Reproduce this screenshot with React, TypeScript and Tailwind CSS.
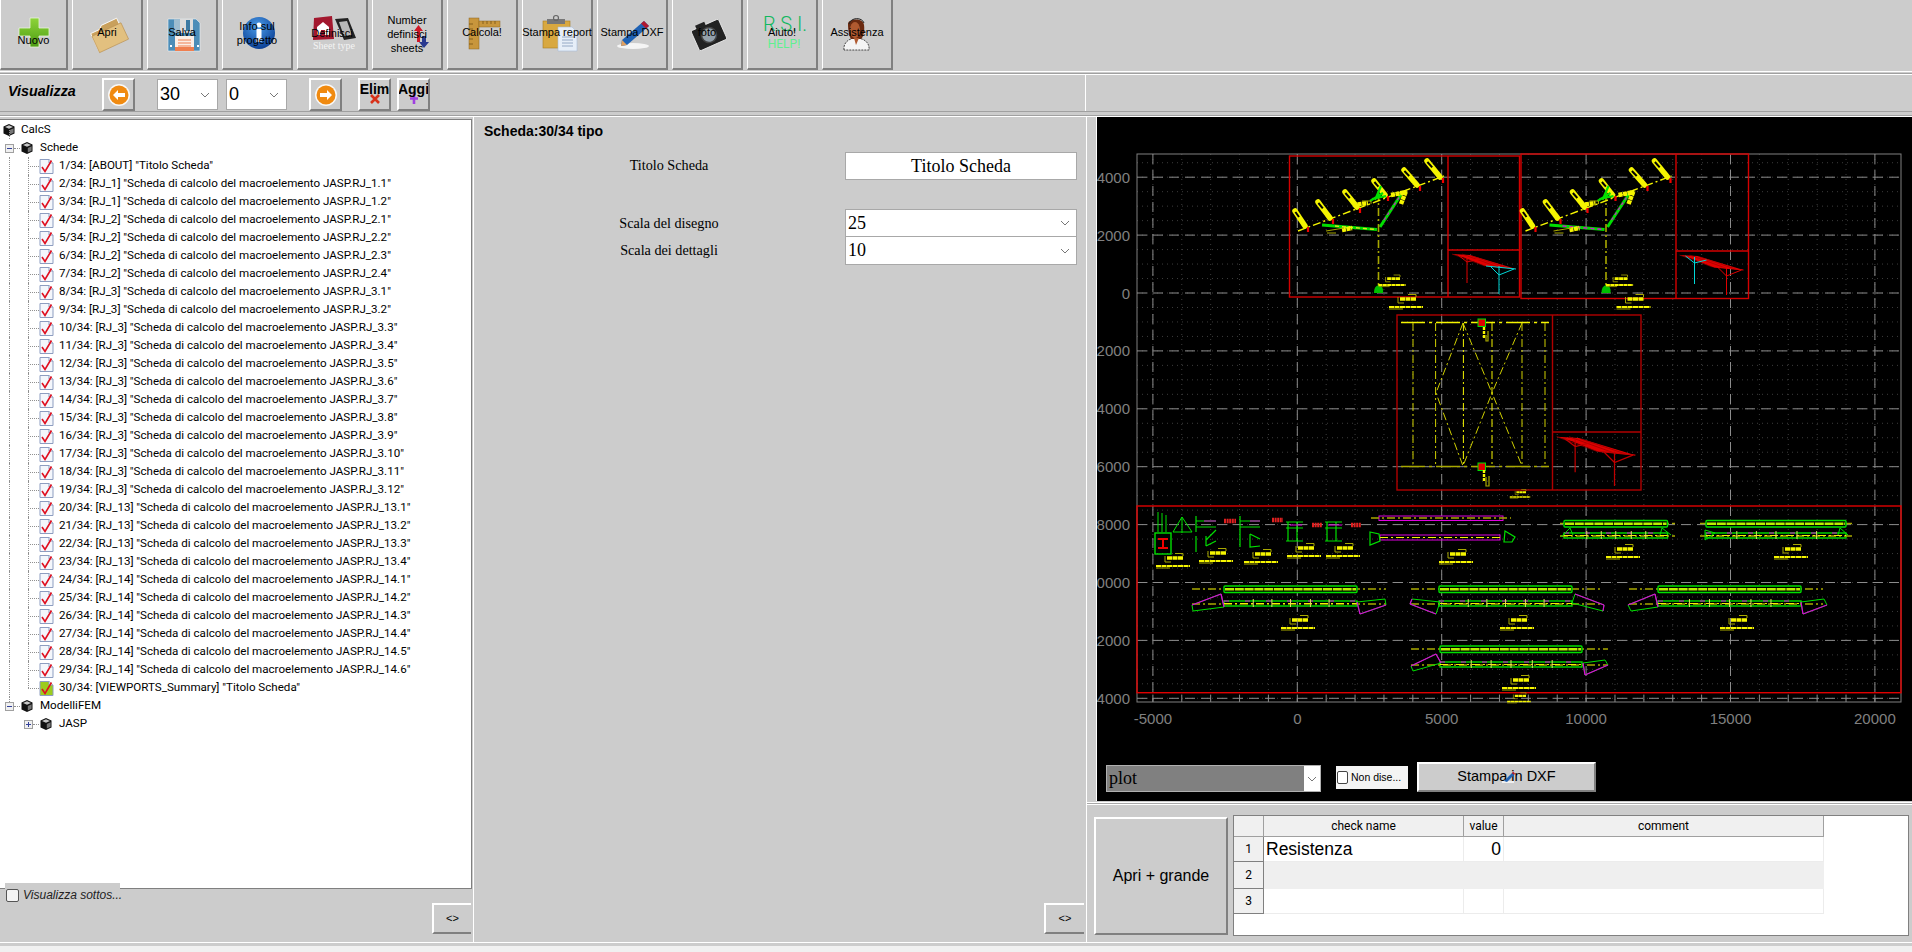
import type { ReactNode } from 'react';

const DD = '8 3 2 3';
const YEL = '#f5f500';
const OLV = '#a8a800';
const GRN = '#00e000';
const MAG = '#e000e0';

const sansFont = "font-['Liberation_Sans',Arial,sans-serif]";
const serifFont = "font-['Liberation_Serif','Times_New_Roman',serif]";
const uiFont = "font-['Roboto','Noto_Sans',sans-serif]";

function Cube() {
  return (
    <svg width="14" height="14" viewBox="0 0 14 14" className="shrink-0">
      <path d="M7 1 L12.5 3.5 V10.5 L7 13 L1.5 10.5 V3.5 Z" fill="#111" />
      <path d="M7 2.2 L11 4 L7 5.8 L3 4 Z" fill="#c8c8c8" />
      <path d="M7.8 7 L11.6 5.2 V9.8 L7.8 11.6 Z" fill="#777" />
    </svg>
  );
}

function CheckDoc({ selected }: { selected?: boolean }) {
  return (
    <svg width="15" height="17" viewBox="0 0 15 17" className="shrink-0">
      <path d="M1 1.5 H10 L14 5 V15.5 H1 Z" fill={selected ? '#9ccc1e' : '#f4f7fc'} stroke="#8d9dc0" />
      <path d="M10 1.5 V5 H14" fill="#fff" stroke="#8d9dc0" />
      <path d="M3 9 L6 13.5 L12.5 2.5" fill="none" stroke="#e01020" strokeWidth="1.6" />
    </svg>
  );
}

function Expander({ open }: { open?: boolean }) {
  return (
    <span className="relative z-10 flex h-[9px] w-[9px] shrink-0 items-center justify-center border border-[#a0a0a0] bg-[#f0f0f0]">
      <span className="absolute h-px w-[5px] bg-[#33419a]" />
      {!open && <span className="absolute h-[5px] w-px bg-[#33419a]" />}
    </span>
  );
}

function Chevron() {
  return (
    <svg width="10" height="6" viewBox="0 0 10 6" className="shrink-0">
      <path d="M1 1 L5 5 L9 1" fill="none" stroke="#777" strokeWidth="1" />
    </svg>
  );
}

type TreeItem = { label: string; selected?: boolean };

const treeItems: TreeItem[] = [
  { label: '1/34: [ABOUT] "Titolo Scheda"' },
  ...[
    ['RJ_1', '1.1'], ['RJ_1', '1.2'],
    ['RJ_2', '2.1'], ['RJ_2', '2.2'], ['RJ_2', '2.3'], ['RJ_2', '2.4'],
    ['RJ_3', '3.1'], ['RJ_3', '3.2'], ['RJ_3', '3.3'], ['RJ_3', '3.4'], ['RJ_3', '3.5'], ['RJ_3', '3.6'],
    ['RJ_3', '3.7'], ['RJ_3', '3.8'], ['RJ_3', '3.9'], ['RJ_3', '3.10'], ['RJ_3', '3.11'], ['RJ_3', '3.12'],
    ['RJ_13', '13.1'], ['RJ_13', '13.2'], ['RJ_13', '13.3'], ['RJ_13', '13.4'],
    ['RJ_14', '14.1'], ['RJ_14', '14.2'], ['RJ_14', '14.3'], ['RJ_14', '14.4'], ['RJ_14', '14.5'], ['RJ_14', '14.6'],
  ].map(([g, n], i) => ({
    label: `${i + 2}/34: [${g}] "Scheda di calcolo del macroelemento JASP.RJ_${n}"`,
  })),
  { label: '30/34: [VIEWPORTS_Summary] "Titolo Scheda"', selected: true },
];

function Tree() {
  return (
    <div className={`h-[770px] w-[472px] border-t border-r border-b border-[#808080] bg-white pt-px text-[11.6px] text-black ${uiFont}`}>
      <div className="flex h-[18px] items-center gap-[5px] pl-[2px]">
        <Cube />
        <span>CalcS</span>
      </div>
      <div className="relative flex h-[18px] items-center pl-[5px]">
        <span className="absolute top-[-9px] left-[9px] h-[9px] border-l border-dotted border-[#909090]" />
        <Expander open />
        <span className="w-[6px] border-t border-dotted border-[#909090]" />
        <Cube />
        <span className="ml-[6px]">Schede</span>
      </div>
      {treeItems.map((it, i) => (
        <div key={it.label} className="relative flex h-[18px] items-center pl-[28px]">
          <span className="absolute top-0 bottom-0 left-[9px] border-l border-dotted border-[#909090]" />
          <span className={`absolute top-0 left-[28px] border-l border-dotted border-[#909090] ${i === treeItems.length - 1 ? 'h-[9px]' : 'h-[18px]'}`} />
          <span className="w-[11px] shrink-0 border-t border-dotted border-[#909090]" />
          <CheckDoc selected={it.selected} />
          <span className="ml-[5px] whitespace-nowrap">{it.label}</span>
        </div>
      ))}
      <div className="relative flex h-[18px] items-center pl-[5px]">
        <span className="absolute top-0 left-[9px] h-[5px] border-l border-dotted border-[#909090]" />
        <Expander open />
        <span className="w-[6px] border-t border-dotted border-[#909090]" />
        <Cube />
        <span className="ml-[6px]">ModelliFEM</span>
      </div>
      <div className="relative flex h-[18px] items-center pl-[24px]">
        <Expander />
        <span className="w-[6px] border-t border-dotted border-[#909090]" />
        <Cube />
        <span className="ml-[6px]">JASP</span>
      </div>
    </div>
  );
}

function ToolButton({ w = 71, pad, children, icon }: { w?: number; pad: string; children: ReactNode; icon?: ReactNode }) {
  return (
    <div
      className={`relative flex h-[70px] shrink-0 items-center justify-center border-r-2 border-b-2 border-l border-r-[#808080] border-b-[#808080] border-l-white text-center text-[11px] leading-[14px] text-black ${pad} ${w === 68 ? 'w-[68px]' : 'w-[71px]'}`}
    >
      {icon && (
        <svg viewBox="0 0 71 70" className="absolute top-0 left-0 h-[70px] w-[71px]">
          {icon}
        </svg>
      )}
      <span className="relative whitespace-pre">{children}</span>
    </div>
  );
}

const icons = {
  nuovo: (
    <g>
      <defs>
        <linearGradient id="gp" x1="0" y1="0" x2="0" y2="1">
          <stop offset="0" stopColor="#8ed43a" />
          <stop offset="1" stopColor="#4c9c12" />
        </linearGradient>
      </defs>
      <path d="M29 18 H38 V28 H48 V36 H38 V47 H29 V36 H18 V28 H29 Z" fill="url(#gp)" stroke="#e8f5d8" strokeWidth="0.8" />
    </g>
  ),
  apri: (
    <g transform="rotate(-25 36 35)">
      <path d="M20 26 H30 L33 23 H50 V46 H20 Z" fill="#c9a05c" stroke="#fff" strokeWidth="0.8" />
      <rect x="20" y="29" width="32" height="18" fill="#e2c07f" stroke="#b98f4f" strokeWidth="0.6" />
    </g>
  ),
  salva: (
    <g>
      <path d="M20 19 H48 L52 23 V51 H20 Z" fill="#4c8db8" stroke="#eaf2f7" strokeWidth="0.6" />
      <rect x="26" y="19" width="19" height="14" fill="#dcdcdc" />
      <rect x="26" y="19" width="6" height="14" fill="#9dbcd0" />
      <rect x="38" y="20" width="4" height="11" fill="#3d7aa3" />
      <rect x="27" y="36" width="19" height="15" fill="#fbeee6" />
      <path d="M30 40 H43 M30 43 H43 M30 46 H43" stroke="#ef7f50" strokeWidth="1" />
      <rect x="27" y="47" width="19" height="4" fill="#ef7f50" />
      <rect x="22" y="45" width="2" height="2" fill="#fff" />
      <rect x="49" y="45" width="2" height="2" fill="#fff" />
    </g>
  ),
  info: (
    <g>
      <defs>
        <radialGradient id="gi" cx="0.45" cy="0.3" r="0.75">
          <stop offset="0" stopColor="#4a9be8" />
          <stop offset="1" stopColor="#073a90" />
        </radialGradient>
      </defs>
      <circle cx="36" cy="33" r="16" fill="url(#gi)" />
      <circle cx="36" cy="25" r="2.5" fill="#fff" />
      <rect x="33.5" y="29" width="5" height="13" fill="#fff" />
    </g>
  ),
  definisci: (
    <g>
      <path d="M16 18 L34 16 L36 39 L15 40 Z" fill="#a3182e" />
      <path d="M19 27 L25 22 L31 27 V35 H19 Z" fill="#fff" />
      <rect x="23" y="30" width="4" height="5" fill="#a3182e" />
      <path d="M37 19 L50 18 L58 38 L46 40 Z" fill="#222" />
      <path d="M41 22 L49 21 L54 35 L46 36 Z" fill="#b8b8b8" />
      <text x="36" y="49" textAnchor="middle" fontFamily="'Liberation Serif',serif" fontSize="10" fill="#f4f4f4">
        Sheet type
      </text>
    </g>
  ),
  number: (
    <g>
      <path d="M44 42 V31 H41 L45.5 25 L50 31 H47 V42 Z" fill="#d01828" />
      <path d="M49 36 V42 H46 L51 48 L56 42 H53 V36 Z" fill="#2a3a90" />
    </g>
  ),
  calcola: (
    <g>
      <rect x="21" y="18" width="10" height="31" fill="#c8963c" stroke="#8a6420" strokeWidth="0.5" />
      <rect x="31" y="21" width="21" height="6" fill="#c8963c" stroke="#8a6420" strokeWidth="0.5" />
      <path d="M21 24 H25 M21 29 H25 M21 34 H25 M21 39 H25 M21 44 H25 M35 21 V24 M39 21 V24 M43 21 V24 M47 21 V24" stroke="#6a4a10" strokeWidth="0.7" />
    </g>
  ),
  stampa: (
    <g>
      <rect x="20" y="21" width="27" height="27" fill="#d8a840" stroke="#a87c20" strokeWidth="0.6" />
      <rect x="24" y="19" width="18" height="5" fill="#777" />
      <circle cx="33" cy="18" r="2.5" fill="none" stroke="#666" strokeWidth="1.2" />
      <path d="M35 27 H49 L54 32 V51 H35 Z" fill="#e6eef8" stroke="#a8bcd8" strokeWidth="0.6" />
      <path d="M39 37 H50 M39 40 H50 M39 43 H50 M39 46 H50" stroke="#8298b8" strokeWidth="0.8" />
    </g>
  ),
  dxf: (
    <g>
      <ellipse cx="35" cy="46" rx="16" ry="3" fill="#f4f4f4" />
      <path d="M24 40 L46 21 L51 26 L29 45 L23 46 Z" fill="#1f62b4" />
      <path d="M43 23.5 L46 21 L51 26 L48 28.5 Z" fill="#b01830" />
      <path d="M24 40 L29 45 L23 46 Z" fill="#e0a060" />
    </g>
  ),
  foto: (
    <g transform="rotate(-24 36 35)">
      <rect x="21" y="24" width="30" height="22" rx="2" fill="#222" stroke="#eee" strokeWidth="0.8" />
      <rect x="27" y="21" width="10" height="4" fill="#222" />
      <circle cx="36" cy="35" r="7.5" fill="#94a0aa" stroke="#444" strokeWidth="1.5" />
    </g>
  ),
  aiuto: (
    <g>
      <text x="37" y="31" textAnchor="middle" fontFamily="Roboto,sans-serif" fontWeight="300" fontSize="20" fill="#10b860">
        R.S.I.
      </text>
      <text x="36" y="48" textAnchor="middle" fontFamily="Roboto,sans-serif" fontWeight="400" fontSize="12" fill="#60f090">
        HELP!
      </text>
    </g>
  ),
  assistenza: (
    <g>
      <path d="M21 50 C20 42 27 38 33 38 C40 38 47 42 46 50 Z" fill="#f4f4f4" stroke="#222" strokeWidth="0.8" strokeDasharray="2 1" />
      <path d="M25 24 C25 19 40 17 41 25 C42 31 40 38 38 39 L28 39 C26 36 25 30 25 24 Z" fill="#6a2a10" />
      <ellipse cx="32" cy="30" rx="5" ry="8" fill="#b05a30" />
      <path d="M31 38 L33 45 L36 38 Z" fill="#b05a30" />
      <path d="M26 24 C28 17 39 17 41 23" fill="none" stroke="#222" strokeWidth="1" />
    </g>
  ),
};

function ArrowButton({ left }: { left?: boolean }) {
  return (
    <div className="flex h-[33px] w-[33px] shrink-0 items-center justify-center border-2 border-t-white border-r-[#808080] border-b-[#808080] border-l-white">
      <svg width="24" height="24" viewBox="0 0 24 24">
        <circle cx="12" cy="12" r="11" fill="#fff" opacity="0.85" />
        <circle cx="12" cy="12" r="9.5" fill="#f08a10" />
        <path d={left ? 'M6 12 L11 7 V10 H18 V14 H11 V17 Z' : 'M18 12 L13 7 V10 H6 V14 H13 V17 Z'} fill="#fff" />
      </svg>
    </div>
  );
}

function SmallSelect({ value, w }: { value: string; w: string }) {
  return (
    <div className={`flex h-[31px] items-center justify-between border border-[#a8a8a8] bg-white pr-[7px] pl-[2px] text-[18px] text-black ${sansFont} ${w}`}>
      <span>{value}</span>
      <Chevron />
    </div>
  );
}

function EditButton({ label, icon }: { label: string; icon: ReactNode }) {
  return (
    <div className="relative flex h-[33px] w-[33px] shrink-0 justify-center overflow-hidden border-2 border-t-white border-r-[#808080] border-b-[#808080] border-l-white text-[14px] leading-[18px] font-bold text-black">
      <svg width="14" height="14" viewBox="0 0 14 14" className="absolute top-[11px] left-[8px]">
        {icon}
      </svg>
      <span className="relative whitespace-nowrap">{label}</span>
    </div>
  );
}

function Tag({ x, y, s = 1 }: { x: number; y: number; s?: number }) {
  return (
    <g transform={`translate(${x} ${y}) scale(${s})`} fill="none">
      <path d="M-6 -3 H10" stroke={YEL} strokeWidth="3.4" strokeDasharray="5 0.5" />
      <path d="M2 -7.5 H10 V-5 M-8 -5 V1 H-2" stroke={OLV} strokeWidth="1" />
      <path d="M-17 5 H17" stroke={YEL} strokeWidth="2.2" strokeDasharray="5 0.5" />
      <path d="M-17 7 H-3" stroke={OLV} strokeWidth="1" />
    </g>
  );
}

function Mesh({ tx, ty, s = 1, left, right }: { tx: number; ty: number; s?: number; left: string; right: string }) {
  return (
    <g transform={`translate(${tx} ${ty}) scale(${s})`} fill="none">
      <path d="M0 0 L18 1 L64 15 L33 12 L13 4 Z" fill="#e00000" />
      <path d="M0 0 L33 12 M10 0 L46 13 M20 2 L56 14" stroke="#900" strokeWidth="0.6" />
      <path d="M15 2 V29 M6 1 L15 8 L27 5" stroke={left} strokeWidth="1" />
      <path d="M47 12 V40 M38 12 L47 21 L62 15" stroke={right} strokeWidth="1" />
      <path d="M34 12 L64 15" stroke={right} strokeWidth="1" />
    </g>
  );
}

function Truss({ dx, swap }: { dx: number; swap?: boolean }) {
  const panels = [
    [1295, 211, 1305, 226],
    [1318, 202, 1330, 218],
    [1345, 192, 1357, 207],
    [1374, 181, 1385, 195],
    [1404, 170, 1417, 185],
    [1427, 161, 1440, 177],
  ];
  return (
    <g transform={`translate(${dx} 0)`} fill="none">
      <path d="M1298 231 L1444 176" stroke={YEL} strokeWidth="1.4" strokeDasharray={DD} />
      {panels.map(([a, b, c, d]) => (
        <g key={a}>
          <path d={`M${a} ${b} L${c} ${d}`} stroke={YEL} strokeWidth="5.5" strokeLinecap="round" strokeDasharray="7 0.8" />
          <path d={`M${a + 0.4} ${b + 1} L${a + (c - a) * 0.4} ${b + (d - b) * 0.4}`} stroke="#000" strokeWidth="2" />
          <path d={`M${c + 3} ${d + 1} v5`} stroke="#f00000" strokeWidth="2.2" />
        </g>
      ))}
      <path d="M1322 225 L1377 229.5" stroke={GRN} strokeWidth="3" />
      <path d="M1335 226 L1376 229.5" stroke={swap ? MAG : '#e8e020'} strokeWidth="1.4" strokeDasharray="4 3" />
      <path d="M1380 227 L1402 193" stroke={GRN} strokeWidth="3" />
      <path d="M1384 220 L1400 196" stroke={MAG} strokeWidth="1.2" strokeDasharray="3 3" />
      <path d="M1378.5 192 V290" stroke={OLV} strokeWidth="1.6" strokeDasharray={DD} />
      <path d="M1375 200 L1381 186 M1372 199 L1386 196 M1370 201 L1383 193" stroke={GRN} strokeWidth="2.2" />
      <path d="M1374 293 Q1374 286 1378.5 285 Q1384 286 1383 293 Z" fill="#00c000" />
      <path d="M1391 195 L1407 192 M1401 204 L1406 191 M1353 205 L1368 203 M1342 230 L1352 228" stroke={YEL} strokeWidth="4.5" strokeDasharray="4 0.6" />
      <path d="M1326 231 L1344 228 M1327 233 H1336 M1362 201 H1371 V204" stroke={OLV} strokeWidth="1" />
      <Tag x={1392} y={281} s={0.8} />
      <Tag x={1406} y={302} />
    </g>
  );
}

function BeamBars({ x1, x2, y, lx1, lx2, dy = 15 }: { x1: number; x2: number; y: number; lx1: number; lx2: number; dy?: number }) {
  const ticks = [0.22, 0.36, 0.5, 0.65, 0.79];
  return (
    <g fill="none">
      <path d={`M${lx1} ${y + 3} H${lx2}`} stroke={OLV} strokeWidth="1.5" strokeDasharray={DD} />
      <rect x={x1} y={y} width={x2 - x1} height="6.5" fill="#000" stroke={GRN} strokeWidth="1.4" rx="1" />
      <path d={`M${x1 + 1} ${y + 3.2} H${x2 - 1}`} stroke="#b8f000" strokeWidth="2.4" strokeDasharray="9 0.8" />
      <rect x={x1} y={y + dy} width={x2 - x1} height="5" stroke={GRN} strokeWidth="1.4" />
      <path d={`M${x1} ${y + dy} H${x2}`} stroke={MAG} strokeWidth="1" strokeDasharray="5 16" />
      <path d={`M${lx1} ${y + dy + 3} H${lx2}`} stroke={OLV} strokeWidth="1.5" strokeDasharray={DD} />
      <path d={`M${x1} ${y + dy + 2.5} H${x2}`} stroke={YEL} strokeWidth="1.2" strokeDasharray={DD} />
      {ticks.map((t) => (
        <path key={t} d={`M${x1 + (x2 - x1) * t} ${y + dy - 2} v8`} stroke="#e0e060" strokeWidth="1" />
      ))}
    </g>
  );
}

function Wedge({ pts, mag }: { pts: number[][]; mag: number[] }) {
  const p = pts.map((a) => a.join(',')).join(' ');
  return (
    <g fill="none">
      <polygon points={p} stroke={GRN} strokeWidth="1" />
      <path d={`M${pts[mag[0]].join(' ')} L${pts[mag[1]].join(' ')}`} stroke={MAG} strokeWidth="1.2" />
      <path d={`M${pts[mag[1]].join(' ')} L${pts[(mag[1] + 1) % pts.length].join(' ')}`} stroke={MAG} strokeWidth="1.2" />
    </g>
  );
}

function Chart() {
  const xs = [-5000, 0, 5000, 10000, 15000, 20000];
  const ys = [4000, 2000, 0, -2000, -4000, -6000, -8000, -10000, -12000, -14000];
  const xAt = (v: number) => 1297.3 + (v / 5000) * 144.4;
  const yAt = (v: number) => 293 - (v / 2000) * 57.9;
  const minorX = Array.from({ length: 26 }, (_, i) => xAt(-5000 + i * 1000));
  const minorY = Array.from({ length: 38 }, (_, i) => yAt(4500 - i * 500));

  return (
    <svg viewBox="1097 117 815 643" className="h-[643px] w-[815px] shrink-0">
      {minorX.map((x) => (
        <path key={x} d={`M${x} 154 V702`} stroke="#3c3c3c" strokeWidth="1" strokeDasharray="1 4" />
      ))}
      {minorY.map((y) => (
        <path key={y} d={`M1137 ${y} H1901`} stroke="#3c3c3c" strokeWidth="1" strokeDasharray="1 4" />
      ))}
      {xs.map((v) => (
        <path key={v} d={`M${xAt(v)} 154 V702`} stroke="#8c8c8c" strokeWidth="1" strokeDasharray="10 6" />
      ))}
      {ys.map((v) => (
        <path key={v} d={`M1137 ${yAt(v)} H1901`} stroke="#8c8c8c" strokeWidth="1" strokeDasharray="10 6" />
      ))}
      {minorX.map((x) => (
        <path key={x} d={`M${x} 695 V702`} stroke="#8c8c8c" strokeWidth="1" />
      ))}
      <rect x="1137" y="154" width="764" height="548" fill="none" stroke="#808080" strokeWidth="1" />
      {xs.map((v) => (
        <text key={v} x={xAt(v)} y="724" textAnchor="middle" fontFamily="'Liberation Sans',Arial,sans-serif" fontSize="15" fill="#808080">
          {v}
        </text>
      ))}
      {ys.map((v) => (
        <text key={v} x="1130" y={yAt(v) + 5.5} textAnchor="end" fontFamily="'Liberation Sans',Arial,sans-serif" fontSize="15" fill="#808080">
          {v}
        </text>
      ))}

      <g fill="none" stroke="#d40000" strokeWidth="1.4">
        <rect x="1289.5" y="156" width="230" height="141" />
        <path d="M1448 156 V297 M1448 250 H1519.5" />
        <rect x="1521" y="154" width="227.5" height="144.5" />
        <path d="M1676 154 V298.5 M1676 251 H1748.5" />
      </g>
      <Truss dx={0} />
      <Truss dx={227.5} swap />
      <Mesh tx={1452} ty={254} left="#e00000" right="#00d8d8" />
      <Mesh tx={1679.5} ty={255} left="#00d8d8" right="#e00000" />

      <g fill="none" stroke="#b00000" strokeWidth="1.4">
        <rect x="1397" y="315" width="244" height="175" />
        <path d="M1552.5 315 V490 M1552.5 432 H1641" />
      </g>
      <g fill="none">
        <path d="M1401 322.5 H1549" stroke={YEL} strokeWidth="1.4" strokeDasharray="24 4 3 4" />
        <path d="M1401 466.5 H1549" stroke={OLV} strokeWidth="1.4" strokeDasharray="24 4 3 4" />
        {[1413, 1435.6, 1463.4, 1492, 1522, 1545].map((x) => (
          <path key={x} d={`M${x} 323 V466`} stroke={x === 1463.4 || x === 1492 ? YEL : '#d0d000'} strokeWidth="1" strokeDasharray={DD} />
        ))}
        <path d="M1463 323 L1436 393 L1463 466 M1522 323 L1492 393 L1463 466 M1463 323 L1492 393 L1522 466" stroke="#d0d000" strokeWidth="1" strokeDasharray={DD} />
        <rect x="1478" y="319" width="7.5" height="7.5" stroke={GRN} fill="#e00000" />
        <rect x="1478" y="463" width="7.5" height="7.5" stroke={GRN} fill="#e00000" />
        <path d="M1484 327 V338 M1484 470 V481" stroke={YEL} strokeWidth="2.4" strokeDasharray="3 1" />
        <path d="M1486 335 V341 H1488 V331 M1486 477 V486 H1489 V476" stroke={OLV} strokeWidth="1.2" />
      </g>
      <Mesh tx={1556.7} ty={436.7} s={1.23} left="#c00000" right="#c00000" />
      <Tag x={1520} y={494} s={0.6} />

      <rect x="1137" y="506" width="764" height="186.7" fill="none" stroke="#e00000" strokeWidth="1.4" />

      {/* dettagli in alto a sinistra */}
      <g fill="none" stroke={GRN} strokeWidth="1">
        <rect x="1155" y="533" width="16" height="21" strokeWidth="1.4" />
        <path d="M1158 512 V532 M1162 513 V532 M1166 515 V532 M1173 532 L1182 517 L1192 532 H1173 M1182 517 V533" />
        <path d="M1196 516 V532 M1196 521 H1216 M1196 527 H1216 M1196 536 V552 M1206 536 V546 M1206 546 L1216 541 M1206 540 L1216 530" strokeWidth="1.2" />
        <path d="M1240 516 V547 M1240 521 H1260 M1240 527 H1260 M1250 534 V547 L1260 546 M1250 534 L1260 539" strokeWidth="1.2" />
        <path d="M1288 522 V541 M1297 522 V541 M1286 522 H1303 M1286 528 H1303 M1286 541 H1303 M1327 522 V541 M1336 522 V541 M1325 522 H1342 M1325 528 H1342 M1325 541 H1342" strokeWidth="1.2" />
      </g>
      <path d="M1158 539 H1168 M1158 548 H1168 M1163 539 V548" stroke="#f00000" strokeWidth="2" fill="none" />
      <path d="M1224 521 H1236 M1272 520 H1283 M1312 525 H1322 M1351 525 H1361" stroke="#e02020" strokeWidth="4.5" strokeDasharray="2 0.6" fill="none" />
      <path d="M1204 521 H1216 M1250 521 H1260 M1290 525 H1302 M1328 525 H1342" stroke={MAG} strokeWidth="1.2" fill="none" />

      {[[1173, 561], [1216, 556], [1261, 557], [1304, 551], [1343, 551], [1456, 557], [1298, 623], [1517, 623], [1623, 552], [1791, 552], [1737, 623], [1519, 683]].map(([x, y]) => (
        <Tag key={`${x}-${y}`} x={x} y={y} />
      ))}
      <Tag x={1519} y={698} s={0.7} />

      {/* prima riga di travi */}
      <g fill="none">
        <rect x="1379" y="516" width="124" height="4.5" stroke={MAG} />
        <path d="M1371 518 H1511" stroke={OLV} strokeWidth="1.5" strokeDasharray={DD} />
        <rect x="1380" y="535" width="120" height="5" stroke={MAG} />
        <path d="M1380 537.5 H1500" stroke={YEL} strokeWidth="1.2" strokeDasharray={DD} />
        <polygon points="1370,532 1379,534 1380,541 1370,545" stroke={GRN} strokeWidth="1.2" />
        <polygon points="1505,531 1515,537 1512,542 1504,542" stroke={GRN} strokeWidth="1.2" />
      </g>
      <BeamBars x1={1564} x2={1667.5} y={520.5} lx1={1560} lx2={1675} dy={12.5} />
      <BeamBars x1={1706} x2={1846} y={520.5} lx1={1700} lx2={1854} dy={12.5} />
      <path d="M1561 537 L1570 528 L1573 535 M1660 535 L1662 528 L1671 535" fill="none" stroke={GRN} />
      <path d="M1705 530 L1715 533 L1705 540 Z M1838 535 L1840 528 L1848 535" fill="none" stroke={GRN} />

      {/* seconda riga */}
      <BeamBars x1={1224} x2={1357} y={586} lx1={1192} lx2={1386} />
      <BeamBars x1={1439} x2={1572} y={586} lx1={1411} lx2={1603} />
      <BeamBars x1={1658} x2={1801} y={586} lx1={1629} lx2={1823} />
      <Wedge pts={[[1192, 605], [1221, 594], [1224, 607], [1193, 611]]} mag={[0, 1]} />
      <Wedge pts={[[1357, 602], [1385, 599], [1386, 605], [1360, 614]]} mag={[2, 3]} />
      <Wedge pts={[[1410, 604], [1412, 599], [1440, 602], [1436, 614]]} mag={[3, 0]} />
      <Wedge pts={[[1572, 603], [1575, 594], [1604, 605], [1603, 611]]} mag={[1, 2]} />
      <Wedge pts={[[1628, 605], [1655, 594], [1658, 607], [1631, 611]]} mag={[0, 1]} />
      <Wedge pts={[[1801, 602], [1824, 599], [1827, 605], [1803, 614]]} mag={[2, 3]} />

      {/* terza riga */}
      <BeamBars x1={1440} x2={1582} y={646} lx1={1411} lx2={1608} dy={16} />
      <Wedge pts={[[1411, 666], [1436, 654], [1441, 663], [1413, 671]]} mag={[0, 1]} />
      <Wedge pts={[[1583, 663], [1605, 660], [1608, 665], [1585, 675]]} mag={[2, 3]} />
    </svg>
  );
}

function PanelBevelButton({ className, children }: { className: string; children: ReactNode }) {
  return (
    <div className={`flex items-center justify-center border-2 border-t-white border-r-[#808080] border-b-[#808080] border-l-white bg-[#cccccc] text-black ${sansFont} ${className}`}>
      {children}
    </div>
  );
}

function CheckTable() {
  const cell = 'border-r border-b border-[#ececec]';
  const rowHead = 'flex items-center justify-center border-r border-b border-[#808080] bg-[#f0f0f0] text-[12px]';
  return (
    <div className={`mt-[10px] ml-[5px] h-[121px] w-[676px] border border-[#808080] bg-white text-black ${uiFont}`}>
      <div className="grid w-[590px] grid-cols-[30px_200px_40px_320px] grid-rows-[21px_25px_27px_25px]">
        <div className="border-r border-b border-[#a0a0a0] bg-[#f0f0f0]" />
        <div className="flex items-center justify-center border-r border-b border-[#a0a0a0] bg-[#f0f0f0] text-[12px]">check name</div>
        <div className="flex items-center justify-center border-r border-b border-[#a0a0a0] bg-[#f0f0f0] text-[12px]">value</div>
        <div className="flex items-center justify-center border-r border-b border-[#a0a0a0] bg-[#f0f0f0] text-[12px]">comment</div>

        <div className={rowHead}>1</div>
        <div className={`flex items-center pl-[2px] text-[17.5px] ${sansFont} ${cell}`}>Resistenza</div>
        <div className={`flex items-center justify-end pr-[2px] text-[17.5px] ${sansFont} ${cell}`}>0</div>
        <div className={cell} />

        <div className={rowHead}>2</div>
        <div className="col-span-3 bg-[#efefef]" />

        <div className={rowHead}>3</div>
        <div className={cell} />
        <div className={cell} />
        <div className={cell} />
      </div>
    </div>
  );
}

export default function App() {
  return (
    <div className={`flex h-[952px] w-[1912px] flex-col overflow-hidden bg-[#cccccc] ${sansFont}`}>
      <div className="flex h-[71px] shrink-0 gap-[4px]">
        <ToolButton w={68} pad="pt-[11px]" icon={icons.nuovo}>Nuovo</ToolButton>
        <ToolButton pad="pb-[4px]" icon={icons.apri}>Apri</ToolButton>
        <ToolButton pad="pb-[4px]" icon={icons.salva}>Salva</ToolButton>
        <ToolButton pad="pb-[3px]" icon={icons.info}>{'Info sul\nprogetto'}</ToolButton>
        <ToolButton pad="pb-[2px]" icon={icons.definisci}>Definisci</ToolButton>
        <ToolButton pad="" icon={icons.number}>{'Number\ndefinisci\nsheets'}</ToolButton>
        <ToolButton pad="pb-[4px]" icon={icons.calcola}>Calcola!</ToolButton>
        <ToolButton pad="pb-[4px]" icon={icons.stampa}>Stampa report</ToolButton>
        <ToolButton pad="pb-[4px]" icon={icons.dxf}>Stampa DXF</ToolButton>
        <ToolButton pad="pb-[4px]" icon={icons.foto}>foto</ToolButton>
        <ToolButton pad="pb-[4px]" icon={icons.aiuto}>Aiuto!</ToolButton>
        <ToolButton pad="pb-[4px]" icon={icons.assistenza}>Assistenza</ToolButton>
      </div>
      <div className="h-[4px] shrink-0 border-t border-b border-t-white border-b-white">
        <div className="mt-px h-px bg-[#a0a0a0]" />
      </div>

      <div className="flex h-[36px] shrink-0">
        <div className="flex w-[1086px] shrink-0 items-center border-r border-white pt-[3px]">
          <span className="mb-[6px] ml-[8px] w-[94px] text-[14.3px] font-bold text-black italic">Visualizza</span>
          <ArrowButton left />
          <div className="ml-[22px] flex gap-[8px]">
            <SmallSelect value="30" w="w-[61px]" />
            <SmallSelect value="0" w="w-[61px]" />
          </div>
          <div className="ml-[22px]">
            <ArrowButton />
          </div>
          <div className="ml-[16px]">
            <EditButton label="Elim" icon={<path d="M3 4 L11 12 M11 4 L3 12" stroke="#d8321a" strokeWidth="2.6" />} />
          </div>
          <div className="ml-[6px]">
            <EditButton label="Aggi" icon={<path d="M7 2 V13 M3 7.5 H11" stroke="#a040e0" strokeWidth="2.6" />} />
          </div>
        </div>
      </div>

      <div className="h-[6px] shrink-0 border-t border-[#a0a0a0]">
        <div className="mt-[3px] h-px bg-[#a0a0a0]" />
        <div className="h-px bg-white" />
      </div>

      <div className="flex h-[825px] shrink-0">
        <div className="relative flex w-[474px] shrink-0 flex-col border-r border-white pt-[2px]">
          <Tree />
          <div className="absolute top-[766px] left-[5px] flex h-[24px] w-[115px] items-center gap-[4px] bg-[#cccccc] pl-px">
            <span className="h-[13px] w-[13px] shrink-0 rounded-[2px] border border-[#555] bg-[#f4f4f4]" />
            <span className="whitespace-nowrap text-[12px] text-[#222] italic">Visualizza sottos...</span>
          </div>
          <PanelBevelButton className="mt-[14px] ml-[432px] h-[31px] w-[39px] border-r-0 text-[11px]">&lt;&gt;</PanelBevelButton>
        </div>

        <div className="flex w-[613px] shrink-0 flex-col border-r border-white pl-[1px]">
          <div className="mt-[6px] ml-[9px] h-[16px] text-[14px] leading-[16px] font-bold text-black">Scheda:30/34 tipo</div>
          <div className={`mt-[13px] flex h-[28px] items-center pl-[18px] text-black ${serifFont}`}>
            <span className="w-[352px] text-center text-[14.2px]">Titolo Scheda</span>
            <div className="flex h-[28px] w-[232px] items-center justify-center border border-[#a8a8a8] bg-white text-[18px]">Titolo Scheda</div>
          </div>
          <div className={`mt-[29px] flex h-[28px] items-center pl-[18px] text-black ${serifFont}`}>
            <span className="mt-[2px] w-[352px] text-center text-[14.2px]">Scala del disegno</span>
            <div className="flex h-[28px] w-[232px] items-center justify-between border border-[#a8a8a8] bg-white pr-[6px] pl-[2px] text-[18px]">
              <span>25</span>
              <Chevron />
            </div>
          </div>
          <div className={`flex h-[28px] items-center pl-[18px] text-black ${serifFont}`}>
            <span className="w-[352px] text-center text-[14.2px]">Scala dei dettagli</span>
            <div className="flex h-[28px] w-[232px] items-center justify-between border border-[#a8a8a8] border-t-0 bg-white pr-[6px] pl-[2px] text-[18px]">
              <span>10</span>
              <Chevron />
            </div>
          </div>
          <PanelBevelButton className="mt-auto mb-[8px] ml-[569px] h-[31px] w-[40px] border-r-0 text-[11px]">&lt;&gt;</PanelBevelButton>
        </div>

        <div className="flex min-w-0 flex-1 flex-col">
          <div className="flex h-[684px] shrink-0 pl-[9px]">
            <div className="flex w-[816px] flex-col border-l border-white bg-black">
              <Chart />
              <div className="flex items-start pl-[9px]">
                <div className={`mt-[5px] flex h-[27px] w-[215px] items-center justify-between border border-[#b0b0b0] bg-[#808080] text-[18px] text-black ${serifFont}`}>
                  <span className="pl-[2px]">plot</span>
                  <span className="flex h-full w-[16px] items-center justify-center bg-white"><Chevron /></span>
                </div>
                <div className={`mt-[6px] ml-[15px] flex h-[23px] w-[72px] items-center gap-[3px] bg-[#f4f4f4] pl-[1px] text-[10.5px] text-black ${sansFont}`}>
                  <span className="h-[13px] w-[11px] shrink-0 rounded-[2px] border border-[#444] bg-white" />
                  <span className="whitespace-nowrap">Non dise...</span>
                </div>
                <PanelBevelButton className="relative mt-[2px] ml-[9px] h-[30px] w-[179px] text-[14.5px]">
                  <span>Stampa in DXF</span>
                  <svg width="14" height="14" viewBox="0 0 14 14" className="absolute top-[6px] left-[83px]">
                    <rect x="0" y="11" width="12" height="2" fill="#f0f0f0" />
                    <path d="M2 11 L10 3 L12 5 L5 12 Z" fill="#1f62b4" />
                    <path d="M10 3 L11 1.5 L13 3.5 L12 5 Z" fill="#b01830" />
                  </svg>
                </PanelBevelButton>
              </div>
            </div>
          </div>
          <div className="mt-[1px] h-[3px] shrink-0 border-t border-b border-t-white border-b-white bg-[#a8a8a8]" />
          <div className="flex min-h-0 flex-1 pl-[7px]">
            <PanelBevelButton className="mt-[12px] h-[118px] w-[134px] text-[16px]">Apri + grande</PanelBevelButton>
            <CheckTable />
          </div>
        </div>
      </div>

      <div className="h-[4px] shrink-0 border-t border-white" />
      <div className="h-[6px] shrink-0 bg-[#f0f0f0]" />
    </div>
  );
}
